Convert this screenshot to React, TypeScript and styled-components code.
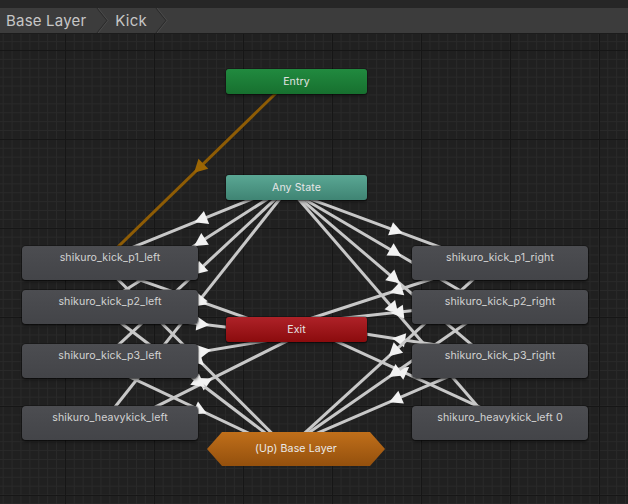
import React from "react";
import styled, { createGlobalStyle, css } from "styled-components";

const GlobalStyle = createGlobalStyle`
  html, body {
    margin: 0;
    padding: 0;
    background: #202020;
    overflow: hidden;
  }
  body {
    font-family: Inter, "Noto Sans", "Liberation Sans", sans-serif;
  }
`;

type Kind = "state" | "entry" | "any" | "exit" | "up";

interface INode {
  id: string;
  label: string;
  x: number;
  y: number;
  w: number;
  h: number;
  kind: Kind;
}

// canvas coordinates (canvas starts 34px below the window top)
const nodes: INode[] = [
  { id: "entry", label: "Entry", x: 226, y: 35, w: 141, h: 25, kind: "entry" },
  { id: "any", label: "Any State", x: 226, y: 141, w: 141, h: 25, kind: "any" },
  { id: "exit", label: "Exit", x: 226, y: 283, w: 141, h: 25, kind: "exit" },
  { id: "up", label: "(Up) Base Layer", x: 207, y: 398, w: 178, h: 34, kind: "up" },
  { id: "p1l", label: "shikuro_kick_p1_left", x: 22, y: 212, w: 176, h: 34, kind: "state" },
  { id: "p2l", label: "shikuro_kick_p2_left", x: 22, y: 256, w: 176, h: 34, kind: "state" },
  { id: "p3l", label: "shikuro_kick_p3_left", x: 22, y: 310, w: 176, h: 34, kind: "state" },
  { id: "hvl", label: "shikuro_heavykick_left", x: 22, y: 372, w: 176, h: 34, kind: "state" },
  { id: "p1r", label: "shikuro_kick_p1_right", x: 412, y: 212, w: 176, h: 34, kind: "state" },
  { id: "p2r", label: "shikuro_kick_p2_right", x: 412, y: 256, w: 176, h: 34, kind: "state" },
  { id: "p3r", label: "shikuro_kick_p3_right", x: 412, y: 310, w: 176, h: 34, kind: "state" },
  { id: "hvr", label: "shikuro_heavykick_left 0", x: 412, y: 372, w: 176, h: 34, kind: "state" },
];

const states = ["p1l", "p2l", "p3l", "hvl", "p1r", "p2r", "p3r", "hvr"];
const combos = ["p1l", "p2l", "p3l", "p1r", "p2r", "p3r"];

const transitions: { from: string; to: string; entry?: boolean }[] = [
  { from: "entry", to: "p1l", entry: true },
  ...states.map((s) => ({ from: "any", to: s })),
  ...states.map((s) => ({ from: s, to: "exit" })),
  ...combos.map((s) => ({ from: s, to: "up" })),
];

const center = (id: string) => {
  const n = nodes.find((n) => n.id === id)!;
  return { x: n.x + n.w / 2, y: n.y + n.h / 2 };
};

const Window = styled.div`
  width: 628px;
  height: 504px;
  display: flex;
  flex-direction: column;
`;

const TitleStrip = styled.div`
  height: 8px;
  background: #262626;
`;

const Breadcrumbs = styled.div`
  height: 25px;
  display: flex;
  align-items: stretch;
  background: #3c3c3c;
  border-bottom: 1px solid #1c1c1c;
`;

const Crumb = styled.div<{ $first?: boolean }>`
  display: flex;
  align-items: center;
  padding-left: 6px;
  padding-right: ${(p) => (p.$first ? "10px" : "8px")};
  font-size: 15px;
  letter-spacing: 0.2px;
  color: #c6c6c6;
`;

const Separator = styled.svg`
  width: 13px;
  height: 25px;
  flex: none;
`;

const Canvas = styled.div`
  position: relative;
  flex: 1;
  overflow: hidden;
  background-color: #202020;
  background-image: linear-gradient(to right, #161616 1px, transparent 1px),
    linear-gradient(to bottom, #161616 1px, transparent 1px),
    linear-gradient(to right, #292929 1px, transparent 1px),
    linear-gradient(to bottom, #292929 1px, transparent 1px);
  background-size: 89px 89px, 89px 89px, 8.9px 8.9px, 8.9px 8.9px;
  background-position: 65px 16px, 65px 16px, 2.7px 7.1px, 2.7px 7.1px;
`;

const Wires = styled.svg`
  position: absolute;
  inset: 0;
  width: 100%;
  height: 100%;
`;

const kindStyles: Record<Kind, ReturnType<typeof css>> = {
  state: css`
    background: linear-gradient(#4c4d51, #434448);
    color: #d2d2d2;
    align-items: flex-start;
    padding-top: 5px;
    border-radius: 4px;
  `,
  entry: css`
    background: linear-gradient(#218a3f, #17702f);
    color: #e2e2e2;
    align-items: center;
    border-radius: 3px;
  `,
  any: css`
    background: linear-gradient(#5aa794, #3f8473);
    color: #e6e6e6;
    align-items: center;
    border-radius: 3px;
  `,
  exit: css`
    background: linear-gradient(#ae2228, #8b0b0d);
    color: #e4e4e4;
    align-items: center;
    border-radius: 3px;
  `,
  up: css`
    background: linear-gradient(#c06f1a, #94500d);
    color: #eaeaea;
    align-items: center;
    clip-path: polygon(15px 0, calc(100% - 15px) 0, 100% 50%, calc(100% - 15px) 100%, 15px 100%, 0 50%);
  `,
};

const Node = styled.div<{ $x: number; $y: number; $w: number; $h: number; $kind: Kind }>`
  position: absolute;
  left: ${(p) => p.$x}px;
  top: ${(p) => p.$y}px;
  width: ${(p) => p.$w}px;
  height: ${(p) => p.$h}px;
  box-sizing: border-box;
  display: flex;
  justify-content: center;
  font-size: 10.6px;
  line-height: 14px;
  letter-spacing: 0.1px;
  white-space: nowrap;
  box-shadow: ${(p) => (p.$kind === "up" ? "none" : "0 0 0 1px rgba(0,0,0,0.3), 0 2px 3px rgba(0,0,0,0.45)")};
  ${(p) => kindStyles[p.$kind]}
`;

const Transition = ({ from, to, entry }: { from: string; to: string; entry?: boolean }) => {
  const a = center(from);
  const b = center(to);
  const len = Math.hypot(b.x - a.x, b.y - a.y);
  const dx = (b.x - a.x) / len;
  const dy = (b.y - a.y) / len;
  const nx = -dy * 6;
  const ny = dx * 6;
  const x1 = a.x + nx;
  const y1 = a.y + ny;
  const x2 = b.x + nx;
  const y2 = b.y + ny;
  const mx = (x1 + x2) / 2;
  const my = (y1 + y2) / 2;
  const tip = `${mx + dx * 7},${my + dy * 7}`;
  const l = `${mx - dx * 6 - dy * 7},${my - dy * 6 + dx * 7}`;
  const r = `${mx - dx * 6 + dy * 7},${my - dy * 6 - dx * 7}`;
  return (
    <g>
      <line x1={x1} y1={y1} x2={x2} y2={y2} stroke={entry ? "#8e5c05" : "#c8c8c8"} strokeWidth={3} />
      <polygon points={`${tip} ${l} ${r}`} fill={entry ? "#9c6604" : "#f2f2f2"} />
    </g>
  );
};

const Chevron = () => (
  <Separator viewBox="0 0 13 25">
    <polyline points="1,0 11,12.5 1,25" fill="none" stroke="#2b2b2b" strokeWidth={1.2} />
    <polyline points="2,0 12,12.5 2,25" fill="none" stroke="#4c4c4c" strokeWidth={1} />
  </Separator>
);

const App = () => {
  return (
    <Window>
      <GlobalStyle />
      <TitleStrip />
      <Breadcrumbs>
        <Crumb $first>Base Layer</Crumb>
        <Chevron />
        <Crumb>Kick</Crumb>
        <Chevron />
      </Breadcrumbs>
      <Canvas>
        <Wires>
          {transitions.map((t) => (
            <Transition key={`${t.from}-${t.to}`} {...t} />
          ))}
        </Wires>
        {nodes.map((n) => (
          <Node key={n.id} $x={n.x} $y={n.y} $w={n.w} $h={n.h} $kind={n.kind}>
            {n.label}
          </Node>
        ))}
      </Canvas>
    </Window>
  );
};

export default App;
